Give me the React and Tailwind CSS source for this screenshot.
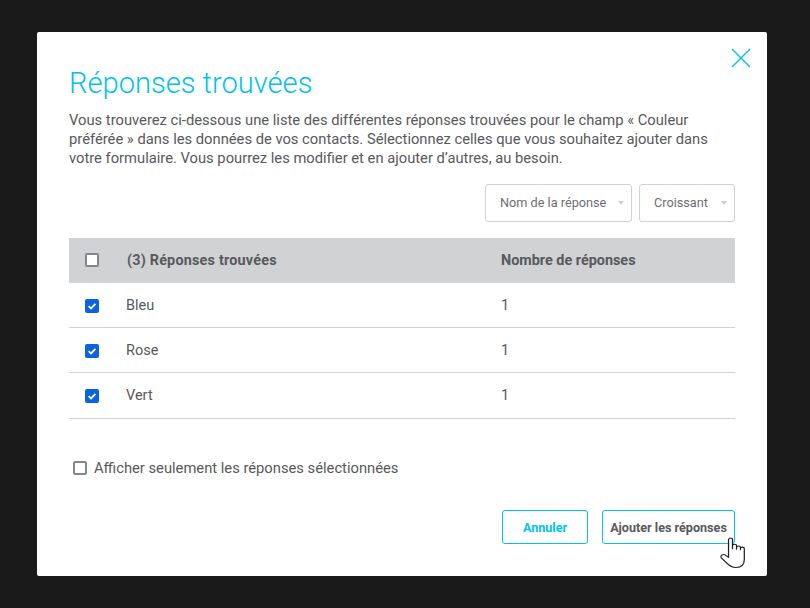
import React from "react";

const Check = ({ checked }) =>
  checked ? (
    <span className="flex h-[14px] w-[14px] items-center justify-center rounded-[2px] bg-[#0b63e0]">
      <svg width="10" height="10" viewBox="0 0 10 10" fill="none">
        <path d="M1.6 5.2 L4 7.4 L8.4 2.8" stroke="#fff" strokeWidth="1.8" />
      </svg>
    </span>
  ) : (
    <span className="block h-[14px] w-[14px] rounded-[2px] border-2 border-[#85858f] bg-white" />
  );

const Caret = () => <span className="h-0 w-0 border-x-[3.5px] border-t-[4px] border-x-transparent border-t-[#cfcfcf]" />;

const Row = ({ name, last }) => (
  <div className={last ? "flex h-[46px] items-center border-b border-[#d1d2d4] pb-[1px] text-[14.5px] text-[#58595b]" : "flex h-[45px] items-center border-b border-[#d1d2d4] text-[14.5px] text-[#58595b]"}>
    <div className="flex w-[46px] justify-center pt-[2px]"><Check checked /></div>
    <div className="w-[386px] pl-[11px] pr-[1px] pt-[2px]">{name}</div>
    <div className="pt-[2px]">1</div>
  </div>
);

export default function App() {
  return (
    <div className="flex h-[608px] w-[810px] items-start bg-[#1a1a1a] pl-[37px] pt-[32px] font-['Roboto',sans-serif]">
      <div className="relative h-[544px] w-[730px] rounded-[2px] bg-white px-[32px] pt-[32px]">
        <button className="absolute left-[694px] top-[16px] text-[#00c3ec]">
          <svg width="20" height="20" viewBox="0 0 20 20" fill="none">
            <path d="M1 1 L19 19 M19 1 L1 19" stroke="currentColor" strokeWidth="1.4" />
          </svg>
        </button>
        <h1 className="h-[38px] text-[29.1px] font-light leading-[38px] text-[#00c3ec]">Réponses trouvées</h1>
        <p className="mt-[9px] text-[14.74px] leading-[19px] text-[#58595b]">
          Vous trouverez ci-dessous une liste des différentes réponses trouvées pour le champ « Couleur<br />
          préférée » dans les données de vos contacts. Sélectionnez celles que vous souhaitez ajouter dans<br />
          votre formulaire. Vous pourrez les modifier et en ajouter d’autres, au besoin.
        </p>
        <div className="mt-[16px] flex justify-end gap-[7px]">
          <div className="flex h-[38px] w-[147px] items-center justify-between rounded-[3px] border border-[#d1d2d4] pl-[14px] pr-[7px] text-[12.7px] text-[#6d6e71]">
            <span>Nom de la réponse</span><Caret />
          </div>
          <div className="flex h-[38px] w-[96px] items-center justify-between rounded-[3px] border border-[#d1d2d4] pl-[14px] pr-[7px] text-[12.7px] text-[#6d6e71]">
            <span>Croissant</span><Caret />
          </div>
        </div>
        <div className="mt-[16px]">
          <div className="flex h-[45px] items-center bg-[#d1d2d4] text-[14.4px] font-bold text-[#58595b]">
            <div className="flex w-[46px] justify-center pb-[2px]"><Check /></div>
            <div className="w-[386px] pl-[12px] tracking-[0.2px]">(3) Réponses trouvées</div>
            <div>Nombre de réponses</div>
          </div>
          <Row name="Bleu" />
          <Row name="Rose" />
          <Row name="Vert" last />
        </div>
        <label className="mt-[40px] flex h-[18px] items-center gap-[7px] pl-[4px] text-[14.74px] text-[#58595b]">
          <Check />
          <span>Afficher seulement les réponses sélectionnées</span>
        </label>
        <div className="mt-[33px] flex justify-end gap-[14px]">
          <button className="h-[34px] w-[86px] rounded-[3px] border border-[#00c3ec] pt-[2px] text-[12.6px] font-bold text-[#00c3ec]">Annuler</button>
          <button className="h-[34px] w-[133px] rounded-[3px] border border-[#00c3ec] pt-[2px] text-[12.6px] font-bold text-[#58595b]">Ajouter les réponses</button>
        </div>
        <svg className="absolute left-[683px] top-[505px]" width="25" height="32" viewBox="0 0 22 33" preserveAspectRatio="none" fill="#fff" stroke="#1c1c2b" strokeWidth="1.1" strokeLinejoin="round">
          <path d="M7.5 17 V3 C7.5 0.5 11 0.5 11 3 V12 V9 C11 7 14.6 7 14.6 9 V12.5 V10.5 C14.6 8.8 18 8.8 18 10.5 V13 V11.8 C18 10 21.4 10 21.4 12 V23 C21.4 28 19 31.5 14 31.5 C10 31.5 8 29.5 6 27 L1.2 21.5 C0 19.5 2.5 17 4.5 18.5 L7.5 21 Z" />
        </svg>
      </div>
    </div>
  );
}
